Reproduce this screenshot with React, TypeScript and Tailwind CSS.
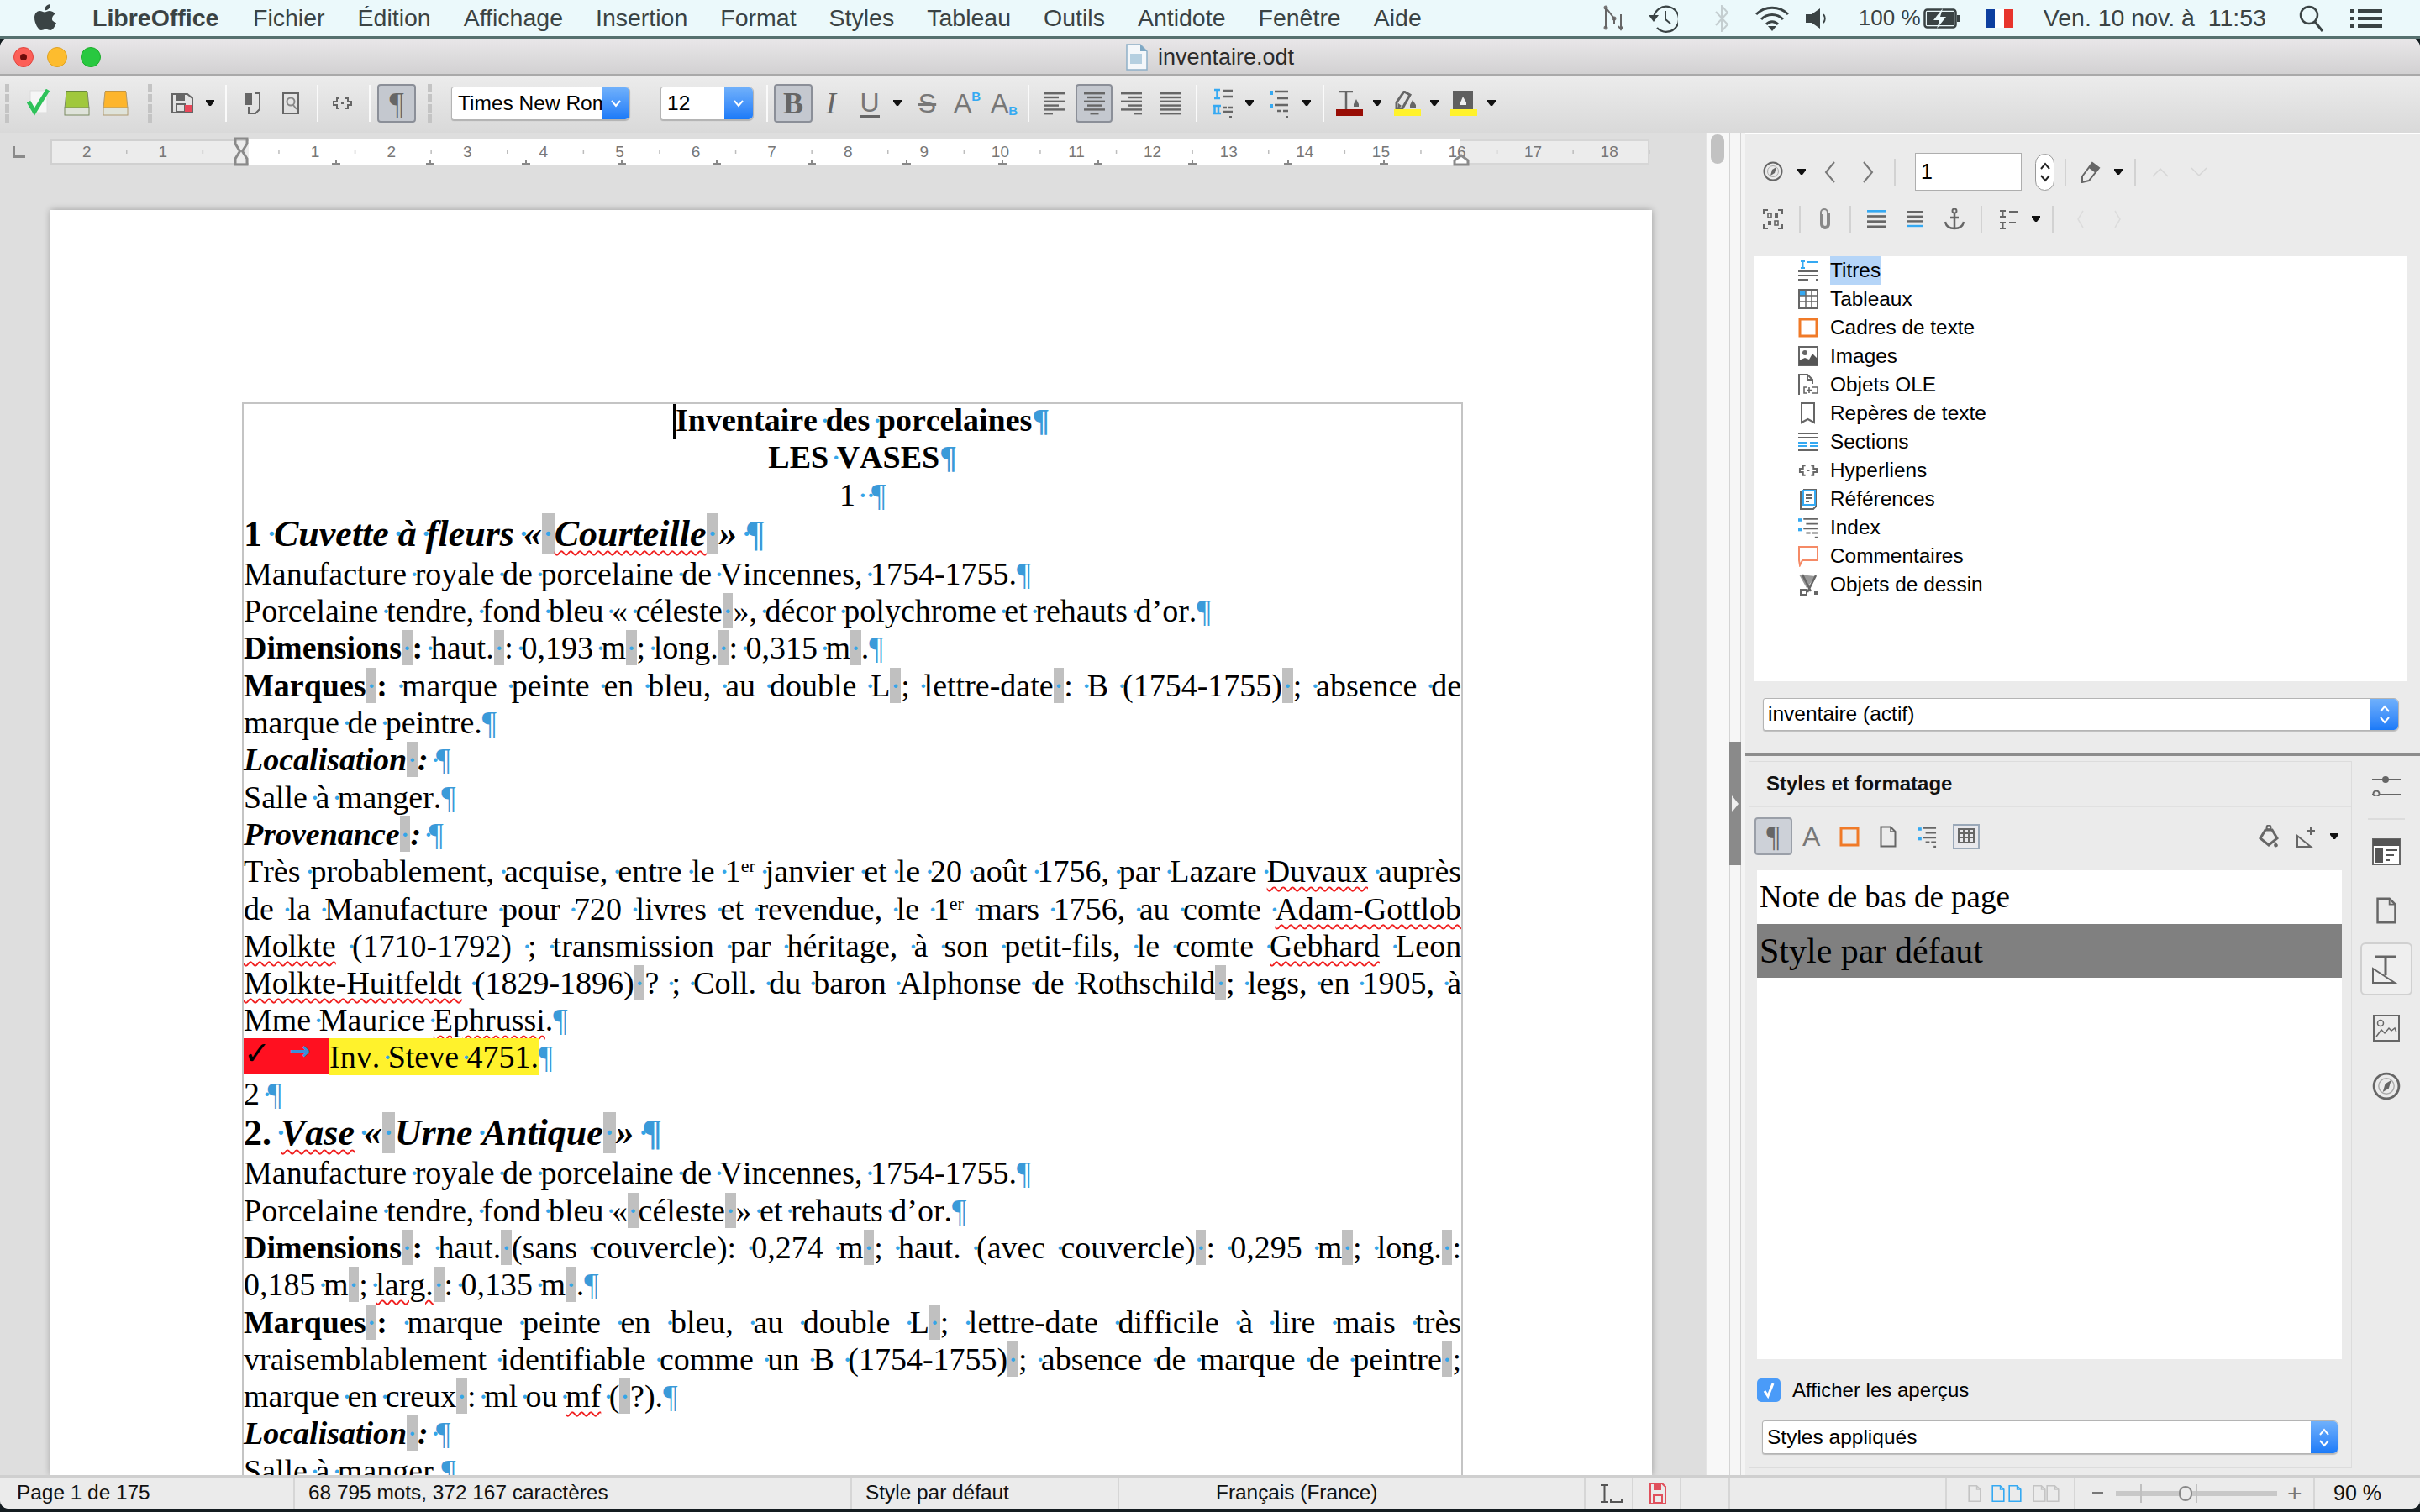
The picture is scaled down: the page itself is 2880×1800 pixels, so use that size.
import React from "react";

type Seg = string | [string, string];
const st: Record<string, string> = {
  b: "font-bold",
  b1: "font-bold mr-[3px]",
  bi: "font-bold italic",
  w: "underline decoration-wavy decoration-[#f02020] decoration-[1.5px] underline-offset-[5px]",
  biw: "font-bold italic underline decoration-wavy decoration-[#f02020] decoration-[1.5px] underline-offset-[5px]",
  s: "text-[22px] relative -top-[12px] leading-[0]",
};

function Run({ t }: { t: string }) {
  const parts = t.split(/( |\||¶)/).filter((p) => p !== "");
  return (
    <>
      {parts.map((p, i) => {
        if (p === " ")
          return (
            <React.Fragment key={i}>
              {" "}
              <span className="inline-block w-0 relative -left-[7px] text-[#35a5e8] font-normal not-italic no-underline">·</span>
            </React.Fragment>
          );
        if (p === "|")
          return (
            <span key={i} className="bg-[#c0c0c0] text-[#35a5e8] font-normal not-italic">
              ·
            </span>
          );
        if (p === "¶")
          return (
            <span key={i} className="text-[#3a9ad9]">
              ¶
            </span>
          );
        return <React.Fragment key={i}>{p}</React.Fragment>;
      })}
    </>
  );
}

function Line({ a, segs, cursor }: { a: "l" | "c" | "j" | "h"; segs: Seg[]; cursor?: boolean }) {
  const cls =
    a === "c"
      ? "text-center pl-[24px] h-[44.3px] text-[38px] leading-[44.3px]"
      : a === "j"
      ? "text-justify [text-align-last:justify] h-[44.3px] text-[38px] leading-[44.3px]"
      : a === "h"
      ? "h-[50px] text-[44px] leading-[50px]"
      : "h-[44.3px] text-[38px] leading-[44.3px]";
  return (
    <div className={cls}>
      {cursor ? <span className="inline-block w-[3px] h-[42px] -ml-[3px] align-top mt-[3px] bg-black" /> : null}
      {segs.map((s, i) =>
        typeof s === "string" ? (
          <Run key={i} t={s} />
        ) : (
          <span key={i} className={st[s[0]]}>
            <Run t={s[1]} />
          </span>
        )
      )}
    </div>
  );
}

/* ---------- small drawings ---------- */
const Arrow = ({ c = "" }: { c?: string }) => (
  <svg width="10" height="10" viewBox="0 0 10 10" className={c}>
    <path d="M0 1h10v2L6 8H4L0 3z" fill="#111" />
  </svg>
);
const Sep = ({ c = "" }: { c?: string }) => <div className={"w-[2px] -mr-[1px] h-[44px] bg-[#fafafa] " + c} />;
const Grip = ({ c = "" }: { c?: string }) => (
  <div className={"w-[5px] -mr-[1px] h-[46px] border-l-[5px] border-dashed border-[#c4c4c4] " + c} />
);
const G = "#666666";
const B = "#35a9f2";

const Lines = ({ blue = -1, w = 25 }: { blue?: number; w?: number }) => (
  <svg width={w} height="26" viewBox="0 0 25 26">
    {[2, 9, 16, 23].map((y, i) => (
      <rect key={y} x="0" y={y - 1.5} width="25" height="3" fill={i === blue ? B : G} />
    ))}
  </svg>
);
const Align = ({ k }: { k: "l" | "c" | "r" | "j" }) => {
  const rows = [25, 17, 25, 17, 25, 10];
  return (
    <svg width="25" height="28" viewBox="0 0 25 28">
      {rows.map((w0, i) => {
        const w = k === "j" ? 25 : w0;
        const x = k === "l" || k === "j" ? 0 : k === "r" ? 25 - w : (25 - w) / 2;
        return <rect key={i} x={x} y={1 + i * 4.8} width={w} height="2.4" fill={G} />;
      })}
    </svg>
  );
};
const DocIcon = ({ w = 20, h = 26, s = G }: { w?: number; h?: number; s?: string }) => (
  <svg width={w} height={h} viewBox="0 0 20 26">
    <path d="M1.5 1.5H13l5.5 5.5v17.5h-17z" fill="none" stroke={s} strokeWidth="2" />
    <path d="M13 1.5V7h5.5" fill="none" stroke={s} strokeWidth="1.5" />
  </svg>
);
const Compass = ({ s = 24 }: { s?: number }) => (
  <svg width={s} height={s} viewBox="0 0 24 24">
    <circle cx="12" cy="12" r="10.5" fill="none" stroke={G} strokeWidth="2" />
    <circle cx="12" cy="12" r="6.5" fill="none" stroke="#aaa" strokeWidth="1" />
    <path d="M16 7l-2 7-5 3 2-7z" fill={G} />
  </svg>
);
const Link = ({ w = 25 }: { w?: number }) => (
  <svg width={w} height="18" viewBox="0 0 25 18">
    <path d="M9 3H6v4H2v4h4v4h3M16 3h3v4h4v4h-4v4h-3" fill="none" stroke={G} strokeWidth="2" />
    <rect x="11" y="8" width="3" height="2" fill={G} />
  </svg>
);
const ListNum = () => (
  <svg width="25" height="36" viewBox="0 0 25 36">
    <path d="M3 2h7M3 12h7M6.5 2v10M1 21h10M1 30h10M3.5 21v9M8 21v9" stroke={B} strokeWidth="2.5" fill="none" />
    <path d="M14 3h11M14 10h11M14 23h4M20 23h5M14 28h11" stroke={G} strokeWidth="2.5" />
    <rect x="21" y="33" width="3" height="3" fill={G} />
  </svg>
);
const ListBul = ({ w = 23, h = 36 }: { w?: number; h?: number }) => (
  <svg width={w} height={h} viewBox="0 0 23 36" preserveAspectRatio="none">
    <rect x="0" y="3" width="4" height="5" fill={B} />
    <rect x="0" y="19" width="4" height="5" fill={B} />
    <path d="M6 4h16M9 12h13M6 20h16M9 27h5M16 27h6" stroke={G} strokeWidth="2.5" />
    <rect x="19" y="33" width="3" height="3" fill={G} />
  </svg>
);
const Book = ({ top, main, edge }: { top: string; main: string; edge: string }) => (
  <svg width="31" height="30" viewBox="0 0 31 30">
    <path d="M3 1h25l2 20H1z" fill={main} stroke={edge} strokeWidth="1" />
    <rect x="1" y="20" width="29" height="9" fill="#dfe3da" stroke={edge} />
    <rect x="3" y="0" width="25" height="2" fill={top} />
  </svg>
);
const Chev = ({ d }: { d: "u" | "d" }) => (
  <svg width="14" height="10" viewBox="0 0 14 10">
    <path d={d === "u" ? "M2 8l5-6 5 6" : "M2 2l5 6 5-6"} fill="none" stroke="#fff" strokeWidth="2" />
  </svg>
);
function Combo({ text, w, blue, h, both, pad = "pl-[5px]" }: { text: string; w: string; blue: string; h: string; both?: boolean; pad?: string }) {
  return (
    <div className={"flex items-stretch bg-white border border-[#b4b4b4] rounded-l-[3px] rounded-r-[6px] overflow-hidden shadow-[0_1px_1px_rgba(0,0,0,0.2)] " + w + " " + h}>
      <div className={"flex-1 overflow-hidden whitespace-nowrap flex items-center text-black text-[24.5px] " + pad}>{text}</div>
      <div className={"flex flex-col items-center justify-center bg-gradient-to-b from-[#6fb0fb] to-[#1a7af8] gap-[3px] " + blue}>
        {both ? (
          <>
            <Chev d="u" />
            <Chev d="d" />
          </>
        ) : (
          <Chev d="d" />
        )}
      </div>
    </div>
  );
}

/* ---------- ruler ---------- */
const nums = ["2", "1", "", "1", "2", "3", "4", "5", "6", "7", "8", "9", "10", "11", "12", "13", "14", "15", "16", "17", "18"];
const tabs = [400, 512, 626, 740, 853, 966, 1079, 1193, 1307, 1419, 1533, 1647];

function Ruler() {
  return (
    <div className="relative ml-[60px] mt-[8px] w-[1903px] h-[30px] flex">
      <div className="w-[236px] bg-[#ececec] border-2 border-[#d0d0d0] border-r-0" />
      <div className="w-[1442px] bg-white" />
      <div className="w-[225px] bg-[#ececec] border-2 border-[#d6d6d6] border-l-0" />
      <div className="absolute -left-[2px] top-0 h-[30px] flex text-[19px] leading-[30px] text-[#777]">
        {nums.map((n, i) => (
          <div key={i} className="w-[90.6px] text-center">
            {n}
          </div>
        ))}
      </div>
      <svg className="absolute -left-[60px] -top-[8px]" width="2000" height="42" viewBox="0 0 2000 42">
        {Array.from({ length: 21 }).map((_, i) => {
          const x = 150 + i * 90.6;
          return <rect key={i} x={x} y="20" width="1.5" height="5" fill="#bdbdbd" />;
        })}
        {tabs.map((x) => (
          <path key={x} d={`M${x} 33v4M${x - 5} 37h10`} stroke="#888" strokeWidth="2" />
        ))}
        <path d="M280 7h14v6l-5.500 9 5.500 9v7h-14v-7l5.500-9-5.500-9z" fill="none" stroke="#8a8a8a" strokeWidth="3" />
        <path d="M1731 38v-5l8-6 8 6v5z" fill="#fff" stroke="#8a8a8a" strokeWidth="3" />
      </svg>
    </div>
  );
}

/* ---------- tree ---------- */
const treeIcons: React.ReactNode[] = [
  <svg width="24" height="26" viewBox="0 0 24 26" key="0">
    <path d="M3 2h5M3 10h5M5.5 2v8" stroke={B} strokeWidth="2" />
    <path d="M11 3h13" stroke={B} strokeWidth="2" />
    <path d="M0 14h24M0 19h24M0 24h12M21 24h3" stroke={G} strokeWidth="2" />
  </svg>,
  <svg width="24" height="24" viewBox="0 0 24 24" key="1">
    <rect x="1" y="1" width="22" height="22" fill="none" stroke={G} strokeWidth="2" />
    <rect x="2" y="2" width="7" height="6" fill={B} />
    <path d="M9 1v22M16 1v22M1 8h22M1 15h22" stroke={G} strokeWidth="1.5" />
  </svg>,
  <svg width="24" height="24" viewBox="0 0 24 24" key="2">
    <rect x="2" y="2" width="20" height="20" fill="#fff" stroke="#f07a28" strokeWidth="3" />
  </svg>,
  <svg width="24" height="24" viewBox="0 0 24 24" key="3">
    <rect x="1" y="1" width="22" height="22" fill="#fff" stroke={G} strokeWidth="2" />
    <circle cx="8" cy="8" r="3" fill={G} />
    <path d="M1 23v-6l7-3 5 2 4-7 6 6v8z" fill="#555" />
  </svg>,
  <svg width="24" height="26" viewBox="0 0 24 26" key="4">
    <path d="M1 25V1h10l6 6v5M11 1v6h6" fill="none" stroke={G} strokeWidth="2" />
    <path d="M10 16H7v7h3M17 16h6v7h-6M10 19.5h6M13 16v7" fill="none" stroke={G} strokeWidth="1.6" />
  </svg>,
  <svg width="20" height="26" viewBox="0 0 20 26" key="5">
    <path d="M2 1h15v23l-7.5-4L2 24z" fill="none" stroke={G} strokeWidth="2" />
  </svg>,
  <svg width="24" height="24" viewBox="0 0 24 24" key="6">
    <path d="M0 2h24M0 7h24M0 22h24" stroke={G} strokeWidth="2" />
    <path d="M0 13h10M14 13h10M0 17h10M14 17h10" stroke={B} strokeWidth="2" />
  </svg>,
  <Link key="7" w={24} />,
  <svg width="22" height="26" viewBox="0 0 22 26" key="8">
    <path d="M2 4v21h15l3-3V2H5" fill="none" stroke={G} strokeWidth="2" />
    <path d="M5 3h14v17H5z" fill="none" stroke={B} strokeWidth="2" />
    <path d="M8 8h8M8 12h8M8 16h4" stroke={G} strokeWidth="1.8" />
  </svg>,
  <ListBul key="9" w={24} h={26} />,
  <svg width="24" height="26" viewBox="0 0 24 26" key="10">
    <path d="M1 2h22v16H5l-3 6-1-6z" fill="#fff" stroke="#f58a66" strokeWidth="2" />
  </svg>,
  <svg width="24" height="26" viewBox="0 0 24 26" key="11">
    <path d="M1 1l20 2-11 14z" fill="#999" />
    <path d="M5 1l10 20M21 2L11 22" stroke={G} strokeWidth="2.5" />
    <rect x="3" y="19" width="7" height="6" fill="#fff" stroke={G} strokeWidth="2" />
    <rect x="19" y="21" width="4" height="4" fill={G} />
  </svg>,
];
const tree = ["Titres", "Tableaux", "Cadres de texte", "Images", "Objets OLE", "Repères de texte", "Sections", "Hyperliens", "Références", "Index", "Commentaires", "Objets de dessin"];

const menus = ["Fichier", "Édition", "Affichage", "Insertion", "Format", "Styles", "Tableau", "Outils", "Antidote", "Fenêtre", "Aide"];

const Bar = () => <div className="w-[2px] h-[32px] bg-[#d2d2d2]" />;

export default function App() {
  return (
    <div className="w-[2880px] h-[1800px] overflow-hidden flex flex-col bg-[#141c20] [font-family:'Liberation_Sans',sans-serif]">
      {/* Mac menu bar */}
      <div className="h-[43px] bg-[#ebf9fb] flex items-center text-[#3a4344] text-[28.5px] shrink-0">
        <svg width="28" height="34" viewBox="0 0 28 34" className="ml-[41px]">
          <path
            d="M21 18c0-4 3-6 3.500-6.500C22.500 8.500 19 8 18 8c-2.500 0-4.500 1.500-6 1.500S8.500 8 6.500 8C3 8 0 11 0 16c0 7 5 15 8 15 2 0 3-1.300 5.500-1.300S17 31 19 31c3 0 6-6 7-9-.5 0-5-1.500-5-4zM17 5.500C18.500 4 19 2 19 0c-2 0-4 1-5.300 2.500C12.500 4 12 6 12 7.500c2 0 3.800-.8 5-2z"
            fill="#3a4344"
          />
        </svg>
        <span className="font-bold ml-[41px] w-[153px]">LibreOffice</span>
        <div className="flex ml-[38px] gap-[39px]">
          {menus.map((m) => (
            <span key={m}>{m}</span>
          ))}
        </div>
        <svg width="24" height="34" viewBox="0 0 24 34" className="ml-[216px]">
          <circle cx="3" cy="4" r="2.500" fill="#777" />
          <circle cx="3" cy="28" r="2.500" fill="#777" />
          <circle cx="13" cy="17" r="2.500" fill="#777" />
          <path d="M3 4v24M3 4l10 13v6M21 12v18m-3-4l3 4 3-4" stroke="#666" strokeWidth="2" fill="none" />
        </svg>
        <svg width="36" height="34" viewBox="0 0 36 34" className="ml-[29px]">
          <path d="M7 17A15 15 0 1 1 11 28" fill="none" stroke="#3a4344" strokeWidth="2.200" />
          <path d="M1 13h12l-6 8z" fill="#3a4344" />
          <path d="M21 8v10l6 5" fill="none" stroke="#3a4344" strokeWidth="2" />
        </svg>
        <svg width="17" height="32" viewBox="0 0 17 32" className="ml-[44px]">
          <path d="M1 8l14 15-7 8V1l7 8L1 24" fill="none" stroke="#c4ced0" strokeWidth="2" />
        </svg>
        <svg width="42" height="30" viewBox="0 0 42 30" className="ml-[30px]">
          <path d="M2 10a27 27 0 0 1 38 0M8 16a18 18 0 0 1 26 0M14 22a9 9 0 0 1 14 0" fill="none" stroke="#3a4344" strokeWidth="3" />
          <path d="M16 24h10l-5 6z" fill="#3a4344" />
        </svg>
        <svg width="26" height="26" viewBox="0 0 26 26" className="ml-[19px]">
          <path d="M0 8h7l10-7v24L7 18H0z" fill="#3a4344" />
          <path d="M21 8a8 8 0 0 1 0 10" fill="none" stroke="#3a4344" strokeWidth="2" />
        </svg>
        <span className="ml-[37px] w-[66px] text-[26px] whitespace-nowrap">100 %</span>
        <svg width="44" height="24" viewBox="0 0 44 24" className="ml-[11px]">
          <rect x="1.500" y="1.500" width="37" height="21" rx="3" fill="none" stroke="#3a4344" strokeWidth="2.500" />
          <rect x="4" y="4" width="32" height="16" fill="#3a4344" />
          <path d="M23 0L12 14h7l-3 10 11-14h-7z" fill="#ebf9fb" />
          <rect x="40" y="8" width="3" height="8" fill="#3a4344" />
        </svg>
        <div className="ml-[31px] w-[32px] h-[22px] flex">
          <div className="flex-1 bg-[#0d3f9f]" />
          <div className="flex-1 bg-white" />
          <div className="flex-1 bg-[#e8342c]" />
        </div>
        <span className="ml-[36px] w-[259px] whitespace-pre">Ven. 10 nov. à  11:53</span>
        <svg width="30" height="32" viewBox="0 0 30 32" className="ml-[45px]">
          <circle cx="12" cy="12" r="10" fill="none" stroke="#3a4344" strokeWidth="2.500" />
          <path d="M19 20l9 11" stroke="#3a4344" strokeWidth="3" />
        </svg>
        <svg width="38" height="22" viewBox="0 0 38 22" className="ml-[31px]">
          <path d="M0 2h5M0 11h5M0 20h5M9 2h29M9 11h29M9 20h29" stroke="#3a4344" strokeWidth="4" />
        </svg>
      </div>
      <div className="h-[3px] bg-[#56716f] shrink-0" />

      {/* Window */}
      <div className="h-[1750px] flex flex-col rounded-[10px] overflow-hidden bg-[#ebebeb] shrink-0">
        {/* title */}
        <div className="relative h-[44px] shrink-0 flex items-center justify-center gap-[12px] pt-[2px] bg-gradient-to-b from-[#e9e7e9] to-[#d2d1d2] border-b-2 border-[#a9a9a9] text-[27px] text-[#2b2b2b]">
          <div className="absolute left-[16px] top-[10px] flex gap-[16px]">
            <div className="w-[24px] h-[24px] rounded-full bg-[#fc5f57] border border-[#e0443e] flex items-center justify-center">
              <div className="w-[8px] h-[8px] rounded-full bg-[#6e0d0a]" />
            </div>
            <div className="w-[24px] h-[24px] rounded-full bg-[#fdbc2e] border border-[#dea123]" />
            <div className="w-[24px] h-[24px] rounded-full bg-[#28c840] border border-[#1dad2b]" />
          </div>
          <svg width="26" height="32" viewBox="0 0 26 32">
            <path d="M1 1h16l8 8v22H1z" fill="#f4f7fa" stroke="#8fb0c8" strokeWidth="1.500" />
            <path d="M17 1v8h8" fill="#7fa8c4" />
            <rect x="5" y="12" width="14" height="12" fill="#b5cfe0" />
          </svg>
          <span>inventaire.odt</span>
        </div>

        {/* toolbar */}
        <div className="h-[68px] shrink-0 flex items-center bg-gradient-to-b from-[#ececec] to-[#d9d9d9] pb-[2px]">
          <Grip c="ml-[6px]" />
          <svg width="29" height="34" viewBox="0 0 29 34" className="ml-[21px]">
            <rect x="5" y="2" width="20" height="26" fill="#f6f6f6" stroke="#dcdcdc" />
            <path d="M3 15l7 12L26 1" fill="none" stroke="#2fc25a" strokeWidth="5" />
          </svg>
          <div className="ml-[16px]">
            <Book top="#6a8a3c" main="#a0c83c" edge="#7a8a60" />
          </div>
          <div className="ml-[15px]">
            <Book top="#c8963c" main="#fdb52c" edge="#b09a70" />
          </div>
          <Grip c="ml-[23px]" />
          <svg width="26" height="24" viewBox="0 0 26 24" className="ml-[24px]">
            <path d="M1 1h18l6 5v17H1z" fill="none" stroke={G} strokeWidth="2" />
            <rect x="6" y="2" width="10" height="7" fill={G} />
            <rect x="6" y="13" width="10" height="9" fill="none" stroke={G} strokeWidth="2" />
            <rect x="16" y="14" width="8" height="8" fill="#e8485a" />
          </svg>
          <Arrow c="ml-[15px]" />
          <Sep c="ml-[13px]" />
          <svg width="20" height="26" viewBox="0 0 20 26" className="ml-[21px]">
            <path d="M13 1h6v19l-5 5H6v-8" fill="none" stroke={G} strokeWidth="2" />
            <rect x="1" y="1" width="9" height="14" fill={G} />
          </svg>
          <svg width="20" height="26" viewBox="0 0 20 26" className="ml-[26px]">
            <path d="M1 1h18v24H1z" fill="none" stroke={G} strokeWidth="2" />
            <circle cx="10" cy="11" r="4.500" fill="none" stroke="#888" strokeWidth="2" />
            <path d="M13 15l4 5" stroke="#888" strokeWidth="2" />
          </svg>
          <Sep c="ml-[21px]" />
          <div className="ml-[17px]">
            <Link />
          </div>
          <Sep c="ml-[19px]" />
          <div className="ml-[9px] w-[46px] h-[46px] flex items-center justify-center rounded-[4px] bg-[#c4c8cf] border-2 border-[#8b8f98] [font-family:'Liberation_Serif',serif] text-[38px] text-[#666]">
            ¶
          </div>
          <Grip c="ml-[14px]" />
          <div className="ml-[24px]">
            <Combo text="Times New Roman" w="w-[213px]" h="h-[40px]" blue="w-[33px]" pad="pl-[7px]" />
          </div>
          <div className="ml-[36px]">
            <Combo text="12" w="w-[111px]" h="h-[40px]" blue="w-[34px]" pad="pl-[7px]" />
          </div>
          <Sep c="ml-[15px]" />
          <div className="ml-[8px] w-[46px] h-[46px] flex items-center justify-center rounded-[4px] bg-[#c4c8cf] border-2 border-[#8b8f98] [font-family:'Liberation_Serif',serif] font-bold text-[36px] text-[#666]">
            B
          </div>
          <div className="ml-[10px] w-[24px] text-center [font-family:'Liberation_Serif',serif] italic text-[36px] text-[#666] leading-[36px]">I</div>
          <div className="ml-[22px] w-[24px] flex flex-col items-center text-[32px] leading-[30px] text-[#777] border-b-[3px] border-[#666]">U</div>
          <Arrow c="ml-[16px]" />
          <div className="ml-[18px] w-[25px] text-center text-[32px] leading-[32px] text-[#777] line-through">S</div>
          <div className="ml-[19px] w-[27px] flex items-start text-[32px] leading-[32px] text-[#777]">
            A<span className="text-[15px] leading-[15px] font-bold text-[#35a9f2]">B</span>
          </div>
          <div className="ml-[17px] w-[26px] flex items-end text-[32px] leading-[32px] text-[#777]">
            A<span className="text-[15px] leading-[15px] font-bold text-[#35a9f2]">B</span>
          </div>
          <Sep c="ml-[18px]" />
          <div className="ml-[19px]">
            <Align k="l" />
          </div>
          <div className="ml-[12px] w-[44px] h-[46px] flex items-center justify-center rounded-[4px] bg-[#c4c8cf] border-2 border-[#8b8f98]">
            <Align k="c" />
          </div>
          <div className="ml-[10px]">
            <Align k="r" />
          </div>
          <div className="ml-[21px]">
            <Align k="j" />
          </div>
          <Sep c="ml-[18px]" />
          <div className="ml-[18px]">
            <ListNum />
          </div>
          <Arrow c="ml-[15px]" />
          <div className="ml-[19px]">
            <ListBul />
          </div>
          <Arrow c="ml-[16px]" />
          <Sep c="ml-[14px]" />
          <svg width="32" height="30" viewBox="0 0 32 30" className="ml-[15px]">
            <path d="M4 1h16M12 1v21" stroke={G} strokeWidth="2.500" />
            <path d="M24 10l-3 6v3h6v-3z" fill={G} />
            <rect x="0" y="22" width="32" height="8" fill="#980d05" />
          </svg>
          <Arrow c="ml-[12px]" />
          <svg width="32" height="30" viewBox="0 0 32 30" className="ml-[15px]">
            <path d="M3 21V14L12 1l7 4-9 16z" fill="none" stroke={G} strokeWidth="3" />
            <path d="M5 21v-6l4 3z" fill={G} />
            <path d="M22 11l-3 6v3h7v-3z" fill={G} />
            <rect x="0" y="22" width="32" height="8" fill="#fff22c" />
          </svg>
          <Arrow c="ml-[11px]" />
          <svg width="32" height="30" viewBox="0 0 32 30" className="ml-[14px]">
            <rect x="3" y="0" width="24" height="22" fill="#5f5f5f" />
            <path d="M15 7l-3 7v3h7v-3z" fill="#eee" />
            <rect x="0" y="22" width="32" height="8" fill="#fff22c" />
          </svg>
          <Arrow c="ml-[12px]" />
        </div>

        {/* main */}
        <div className="flex-1 min-h-0 flex">
          {/* document column */}
          <div className="w-[2030px] shrink-0 flex flex-col overflow-hidden bg-[#dedede] relative">
            <svg width="22" height="16" viewBox="0 0 22 16" className="absolute left-[15px] top-[16px]">
              <path d="M1 0v12h14" fill="none" stroke="#8a8a8a" strokeWidth="4" />
            </svg>
            <Ruler />
            <div className="mt-[54px] ml-[60px] w-[1906px] flex-1 bg-white pt-[229px] shadow-[0_0_8px_rgba(0,0,0,0.3)] overflow-hidden">
              <div className="ml-[228px] w-[1453px] h-[1400px] border-x-2 border-t-2 border-[#c4c4c4] text-black [font-family:'Liberation_Serif',serif] [font-kerning:none]">
                <div className="-mt-[3px]">
                  <Line a="c" cursor segs={[["b", "Inventaire des porcelaines¶"]]} />
                  <Line a="c" segs={[["b", "LES VASES¶"]]} />
                  <Line a="c" segs={["1  ¶"]} />
                  <Line a="h" segs={[["b1", "1 "], ["bi", "Cuvette à fleurs «|"], ["biw", "Courteille"], ["bi", "|» ¶"]]} />
                  <Line a="l" segs={["Manufacture royale de porcelaine de Vincennes, 1754-1755.¶"]} />
                  <Line a="l" segs={["Porcelaine tendre, fond bleu « céleste|», décor polychrome et rehauts d’or.¶"]} />
                  <Line a="l" segs={[["b", "Dimensions|: "], "haut.|: 0,193 m|; long.|: 0,315 m|.¶"]} />
                  <Line a="j" segs={[["b", "Marques|: "], "marque peinte en bleu, au double L|; lettre-date|: B (1754-1755)|; absence de"]} />
                  <Line a="l" segs={["marque de peintre.¶"]} />
                  <Line a="l" segs={[["bi", "Localisation|: "], "¶"]} />
                  <Line a="l" segs={["Salle à manger.¶"]} />
                  <Line a="l" segs={[["bi", "Provenance|: "], "¶"]} />
                  <Line a="j" segs={["Très probablement, acquise, entre le 1", ["s", "er"], " janvier et le 20 août 1756, par Lazare ", ["w", "Duvaux"], " auprès"]} />
                  <Line a="j" segs={["de la Manufacture pour 720 livres et revendue, le 1", ["s", "er"], " mars 1756, au comte ", ["w", "Adam-Gottlob"]]} />
                  <Line a="j" segs={[["w", "Molkte"], " (1710-1792) ; transmission par héritage, à son petit-fils, le comte ", ["w", "Gebhard"], " Leon"]} />
                  <Line a="j" segs={[["w", "Molkte-Huitfeldt"], " (1829-1896)|? ; Coll. du baron Alphonse de Rothschild|; legs, en 1905, à"]} />
                  <Line a="l" segs={["Mme Maurice ", ["w", "Ephrussi"], ".¶"]} />
                  <div className="flex items-start h-[44.3px] -mt-[1px] text-[38px] leading-[44.3px]">
                    <div className="w-[102px] h-[42px] bg-[#ff1020] flex [font-family:'DejaVu_Sans',sans-serif]">
                      <span className="text-[38px] leading-[36px] w-[54px]">✓</span>
                      <span className="text-[30px] leading-[30px] text-[#3a8fd9] font-bold">→</span>
                    </div>
                    <div className="bg-[#fff22c] h-[44px] whitespace-pre">
                      <Run t="Inv. Steve 4751." />
                    </div>
                    <span className="text-[#3a9ad9]">¶</span>
                  </div>
                  <Line a="l" segs={["2 ¶"]} />
                  <Line a="h" segs={[["b", "2. "], ["biw", "Vase"], ["bi", " «|Urne Antique|» ¶"]]} />
                  <Line a="l" segs={["Manufacture royale de porcelaine de Vincennes, 1754-1755.¶"]} />
                  <Line a="l" segs={["Porcelaine tendre, fond bleu «|céleste|» et rehauts d’or.¶"]} />
                  <Line a="j" segs={[["b", "Dimensions|: "], "haut.|(sans couvercle): 0,274 m|; haut. (avec couvercle)|: 0,295 m|; long.|:"]} />
                  <Line a="l" segs={["0,185 m|; ", ["w", "larg."], "|: 0,135 m|.¶"]} />
                  <Line a="j" segs={[["b", "Marques|: "], "marque peinte en bleu, au double L|; lettre-date difficile à lire mais très"]} />
                  <Line a="j" segs={["vraisemblablement identifiable comme un B (1754-1755)|; absence de marque de peintre|;"]} />
                  <Line a="l" segs={["marque en creux|: ml ou ", ["w", "mf"], " (|?).¶"]} />
                  <Line a="l" segs={[["bi", "Localisation|: "], "¶"]} />
                  <Line a="l" segs={["Salle à manger.¶"]} />
                </div>
              </div>
            </div>
          </div>

          {/* scrollbar */}
          <div className="w-[28px] shrink-0 bg-[#f8f8f8] border-l border-[#e4e4e4] pt-[2px] pl-[5px]">
            <div className="w-[16px] h-[35px] rounded-full bg-[#c2c2c2]" />
          </div>

          {/* splitter */}
          <div className="w-[19px] shrink-0 bg-[#f4f4f4] flex flex-col">
            <div className="w-[14px] h-[725px] border-x border-[#d4d4d4] bg-[#f6f6f6]" />
            <div className="w-[14px] h-[147px] bg-[#8a8a8a] flex items-center justify-center">
              <svg width="8" height="20" viewBox="0 0 8 20">
                <path d="M0 0l8 10-8 10z" fill="#f0f0f0" />
              </svg>
            </div>
            <div className="w-[14px] flex-1 border-x border-[#d4d4d4] bg-[#f6f6f6]" />
          </div>

          {/* sidebar */}
          <div className="flex-1 min-w-0 flex flex-col bg-[#ebebeb] border-t-2 border-white">
            <div className="h-[736px] shrink-0 pt-[22px]">
              {/* nav row 1 */}
              <div className="h-[45px] flex items-center">
                <div className="ml-[21px] -mt-[2px]">
                  <Compass />
                </div>
                <Arrow c="ml-[17px]" />
                <svg width="14" height="26" viewBox="0 0 14 26" className="ml-[22px]">
                  <path d="M12 1L2 13l10 12" fill="none" stroke="#777" strokeWidth="2" />
                </svg>
                <svg width="14" height="26" viewBox="0 0 14 26" className="ml-[31px]">
                  <path d="M2 1l10 12L2 25" fill="none" stroke="#777" strokeWidth="2" />
                </svg>
                <div className="ml-[24px]"><Bar /></div>
                <div className="ml-[23px] w-[127px] h-[45px] bg-white border border-[#aeaeae] pl-[6px] flex items-center text-[25px] text-black">1</div>
                <div className="ml-[16px] w-[23px] h-[44px] bg-white border border-[#999] rounded-full flex flex-col items-center justify-center gap-[6px]">
                  <svg width="12" height="9" viewBox="0 0 12 9"><path d="M1 8l5-6 5 6" fill="none" stroke="#222" strokeWidth="2" /></svg>
                  <svg width="12" height="9" viewBox="0 0 12 9"><path d="M1 1l5 6 5-6" fill="none" stroke="#222" strokeWidth="2" /></svg>
                </div>
                <div className="ml-[12px]"><Bar /></div>
                <svg width="24" height="26" viewBox="0 0 24 26" className="ml-[17px]">
                  <path d="M2 18L14 2l8 6-12 15-8 2z" fill="none" stroke={G} strokeWidth="2" />
                  <path d="M10 8l8 6 4-6-8-6z" fill={G} />
                </svg>
                <Arrow c="ml-[16px]" />
                <div className="ml-[14px]"><Bar /></div>
                <svg width="20" height="12" viewBox="0 0 20 12" className="ml-[19px]"><path d="M1 11l9-9 9 9" fill="none" stroke="#d6d6d6" strokeWidth="1.500" /></svg>
                <svg width="20" height="12" viewBox="0 0 20 12" className="ml-[26px]"><path d="M1 1l9 9 9-9" fill="none" stroke="#d6d6d6" strokeWidth="1.500" /></svg>
              </div>
              {/* nav row 2 */}
              <div className="h-[32px] mt-[18px] flex items-center">
                <svg width="24" height="24" viewBox="0 0 24 24" className="ml-[21px]">
                  <path d="M1 6V1h5M18 1h5v5M1 18v5h5M18 23h5v-5" fill="none" stroke={G} strokeWidth="2" />
                  <rect x="6" y="5" width="4" height="5" fill="none" stroke={G} strokeWidth="1.600" />
                  <rect x="14" y="5" width="4" height="5" fill={G} />
                  <rect x="6" y="14" width="4" height="5" fill={G} />
                  <rect x="14" y="14" width="4" height="5" fill="none" stroke={G} strokeWidth="1.600" />
                </svg>
                <div className="ml-[19px]"><Bar /></div>
                <svg width="16" height="26" viewBox="0 0 16 26" className="ml-[21px]">
                  <path d="M5 7v12a3 3 0 0 0 6 0V5a4 4 0 0 0-8 0v14a5 5 0 0 0 10 0V6" fill="none" stroke="#888" strokeWidth="2" />
                </svg>
                <div className="ml-[21px]"><Bar /></div>
                <div className="ml-[19px]"><Lines blue={0} w={22} /></div>
                <div className="ml-[25px]"><Lines blue={3} w={20} /></div>
                <svg width="24" height="26" viewBox="0 0 24 26" className="ml-[25px]">
                  <circle cx="12" cy="3" r="2.500" fill="none" stroke={G} strokeWidth="2" />
                  <path d="M12 5v18M7 11h10M1 16c1 6 6 8 11 8s10-2 11-8" fill="none" stroke={G} strokeWidth="2.500" />
                </svg>
                <div className="ml-[19px]"><Bar /></div>
                <svg width="23" height="24" viewBox="0 0 23 24" className="ml-[20px]">
                  <path d="M1 2h7M1 9h7M4.500 2v7M1 16h7M1 23h7M4.500 16v7M12 3h11M12 16h8" stroke={G} strokeWidth="2" />
                </svg>
                <Arrow c="ml-[16px]" />
                <div className="ml-[14px]"><Bar /></div>
                <svg width="8" height="22" viewBox="0 0 8 22" className="ml-[28px]"><path d="M7 1L1 11l6 10" fill="none" stroke="#dcdcdc" strokeWidth="1.500" /></svg>
                <svg width="8" height="22" viewBox="0 0 8 22" className="ml-[36px]"><path d="M1 1l6 10-6 10" fill="none" stroke="#dcdcdc" strokeWidth="1.500" /></svg>
              </div>
              {/* tree */}
              <div className="ml-[11px] mt-[28px] w-[776px] h-[506px] bg-white pl-[52px] text-[24.4px] text-black">
                {tree.map((t, i) => (
                  <div key={t} className="h-[34px] flex items-center">
                    <div className="w-[24px] flex items-center justify-center">{treeIcons[i]}</div>
                    <span className={"ml-[14px] h-[34px] leading-[34px] " + (i === 0 ? "bg-[#b5d5f8]" : "")}>{t}</span>
                  </div>
                ))}
              </div>
              <div className="ml-[21px] mt-[20px]">
                <Combo text="inventaire (actif)" w="w-[757px]" h="h-[39px]" blue="w-[33px]" both />
              </div>
            </div>

            <div className="h-[4px] shrink-0 bg-[#8c8c8c] border-t border-[#c8c8c8]" />

            <div className="flex-1 min-h-0 flex">
              {/* styles panel */}
              <div className="ml-[4px] mt-[6px] mb-[8px] w-[718px] shrink-0 flex flex-col border border-[#dcdcdc]">
                <div className="h-[54px] shrink-0 flex items-center pl-[20px] font-bold text-[24px] text-[#111] border-b-2 border-[#e0e0e0]">
                  Styles et formatage
                </div>
                <div className="h-[75px] pb-[6px] shrink-0 flex items-center">
                  <div className="ml-[6px] w-[45px] h-[45px] flex items-center justify-center rounded-[4px] bg-[#cdd1d8] border-2 border-[#9a9fa8] [font-family:'Liberation_Serif',serif] text-[36px] text-[#666]">
                    ¶
                  </div>
                  <span className="ml-[12px] w-[20px] text-center text-[32px] text-[#777]">A</span>
                  <svg width="24" height="24" viewBox="0 0 24 24" className="ml-[24px]">
                    <rect x="2" y="2" width="20" height="20" fill="none" stroke="#f07a28" strokeWidth="3" />
                  </svg>
                  <div className="ml-[24px]"><DocIcon /></div>
                  <div className="ml-[26px]"><ListBul w={22} h={26} /></div>
                  <svg width="32" height="30" viewBox="0 0 32 30" className="ml-[19px]">
                    <rect x="1" y="1" width="30" height="28" fill="#e8e8ec" stroke="#9aa8b8" strokeWidth="2" />
                    <path d="M7 6h18v16H7zM7 11h18M7 16h18M13 6v16M19 6v16" fill="none" stroke="#666" strokeWidth="2" />
                  </svg>
                  <svg width="24" height="28" viewBox="0 0 24 28" className="ml-[332px]">
                    <circle cx="12" cy="3" r="2.500" fill="none" stroke={G} strokeWidth="2" />
                    <path d="M8 6h8l6 10-10 8L2 16z" fill="none" stroke={G} strokeWidth="3" />
                    <path d="M20 20l-2 4a2.500 2.500 0 0 0 5 0z" fill={G} />
                  </svg>
                  <svg width="24" height="26" viewBox="0 0 24 26" className="ml-[21px]">
                    <path d="M1 12l16 13H1z" fill="none" stroke={G} strokeWidth="2" />
                    <path d="M17 1v10M12 6h10" stroke={G} strokeWidth="2" />
                  </svg>
                  <Arrow c="ml-[16px]" />
                </div>
                <div className="ml-[9px] w-[696px] flex-1 min-h-0 bg-white [font-family:'Liberation_Serif',serif] text-black">
                  <div className="h-[64px] flex items-center pl-[3px] text-[37px]">Note de bas de page</div>
                  <div className="h-[64px] flex items-center pl-[3px] text-[42px] bg-[#808080]">Style par défaut</div>
                </div>
                <div className="h-[64px] shrink-0 flex items-center pt-[10px]">
                  <div className="ml-[9px] w-[28px] h-[28px] rounded-[5px] bg-[#4a9bf8] flex items-center justify-center">
                    <svg width="18" height="20" viewBox="0 0 18 20">
                      <path d="M4 11l4 6 6-15" fill="none" stroke="#fff" strokeWidth="3" />
                    </svg>
                  </div>
                  <span className="ml-[14px] text-[24px] text-black">Afficher les aperçus</span>
                </div>
                <div className="ml-[15px] mt-[9px] mb-[16px]">
                  <Combo text="Styles appliqués" w="w-[686px]" h="h-[40px]" blue="w-[32px]" both />
                </div>
              </div>
              {/* tabs */}
              <div className="flex-1 flex flex-col items-center pt-[24px]">
                <svg width="34" height="24" viewBox="0 0 34 24">
                  <path d="M0 4h34M0 22h34" stroke={G} strokeWidth="2" />
                  <circle cx="16" cy="4" r="4" fill={G} />
                  <circle cx="5" cy="21" r="3.500" fill="#ebebeb" stroke={G} strokeWidth="2" />
                </svg>
                <div className="w-[44px] h-[2px] bg-[#dcdcdc] mt-[26px]" />
                <svg width="34" height="32" viewBox="0 0 34 32" className="mt-[22px]">
                  <rect x="1" y="1" width="32" height="30" fill="#fff" stroke={G} strokeWidth="2" />
                  <rect x="1" y="1" width="32" height="8" fill="#555" />
                  <rect x="4" y="12" width="9" height="17" fill="#555" />
                  <path d="M16 14h14M16 20h10M16 26h5" stroke="#555" strokeWidth="2" />
                </svg>
                <div className="mt-[38px]"><DocIcon w={28} h={32} /></div>
                <div className="mt-[22px] w-[62px] h-[63px] border-2 border-[#d0d0d0] rounded-[6px] bg-[#efefef] flex items-center justify-center">
                  <svg width="34" height="34" viewBox="0 0 34 34">
                    <path d="M4 2h24M16 2v22" stroke={G} strokeWidth="3" />
                    <path d="M1 16l26 17H1z" fill="none" stroke={G} strokeWidth="2" />
                  </svg>
                </div>
                <svg width="32" height="32" viewBox="0 0 32 32" className="mt-[23px]">
                  <rect x="1" y="1" width="30" height="30" fill="none" stroke={G} strokeWidth="2" />
                  <circle cx="9" cy="10" r="3.500" fill="none" stroke={G} strokeWidth="1.500" />
                  <path d="M4 26l6-8 4 4 5-6 3 3 4-3 2 5" fill="none" stroke={G} strokeWidth="1.500" />
                </svg>
                <div className="mt-[36px]"><Compass s={34} /></div>
              </div>
            </div>
          </div>
        </div>

        {/* status bar */}
        <div className="h-[40px] shrink-0 flex items-stretch bg-[#ebebeb] border-t-[3px] border-[#cfcfcf] text-[24.4px] text-[#111]">
          <div className="w-[351px] border-r-2 border-[#d6d6d6] pl-[20px] flex items-center">Page 1 de 175</div>
          <div className="w-[663px] border-r-2 border-[#d6d6d6] pl-[16px] flex items-center">68 795 mots, 372 167 caractères</div>
          <div className="w-[318px] border-r-2 border-[#d6d6d6] pl-[16px] flex items-center">Style par défaut</div>
          <div className="w-[555px] border-r-2 border-[#d6d6d6] pl-[115px] flex items-center">Français (France)</div>
          <div className="w-[57px] border-r-2 border-[#d6d6d6] pl-[16px] flex items-center">
            <svg width="28" height="24" viewBox="0 0 28 24">
              <path d="M2 2h9M2 22h9M6.500 2v20M14 18v4h13v-4" fill="none" stroke="#555" strokeWidth="2" />
            </svg>
          </div>
          <div className="w-[57px] border-r-2 border-[#d6d6d6] pl-[19px] flex items-center">
            <svg width="20" height="26" viewBox="0 0 20 26">
              <path d="M1 1h14l4 4v20H1z" fill="none" stroke="#e0505c" strokeWidth="2" />
              <rect x="5" y="2" width="9" height="7" fill="#e0505c" />
              <rect x="5" y="15" width="10" height="9" fill="none" stroke="#e0505c" strokeWidth="2" />
            </svg>
          </div>
          <div className="w-[58px] border-r-2 border-[#d6d6d6]" />
          <div className="w-[258px] border-r-2 border-[#d6d6d6]" />
          <div className="w-[153px] border-r-2 border-[#d6d6d6] flex items-center pl-[25px]">
            <DocIcon w={16} h={26} s="#c4c4c4" />
            <div className="ml-[12px] flex gap-[4px]">
              <DocIcon w={16} h={26} s="#35a9f2" />
              <DocIcon w={16} h={26} s="#35a9f2" />
            </div>
            <div className="ml-[13px] flex">
              <DocIcon w={16} h={26} s="#c4c4c4" />
              <DocIcon w={16} h={26} s="#c4c4c4" />
            </div>
          </div>
          <div className="w-[285px] border-r-2 border-[#d6d6d6] flex items-center pl-[20px] text-[#777]">
            <div className="w-[13px] h-[3px] bg-[#777]" />
            <div className="relative ml-[15px] w-[192px] h-[6px] bg-[#c8c8c8]">
              <div className="absolute left-[29px] -top-[8px] w-[2px] h-[22px] bg-[#c0c0c0]" />
              <div className="absolute left-[95px] -top-[8px] w-[2px] h-[22px] bg-[#c0c0c0]" />
              <div className="absolute left-[75px] -top-[6px] w-[16px] h-[18px] rounded-full bg-[#ebebeb] border-2 border-[#888]" />
            </div>
            <span className="ml-[12px] text-[30px] leading-[30px]">+</span>
          </div>
          <div className="flex-1 pl-[22px] flex items-center text-[25px]">90 %</div>
        </div>
      </div>
    </div>
  );
}
